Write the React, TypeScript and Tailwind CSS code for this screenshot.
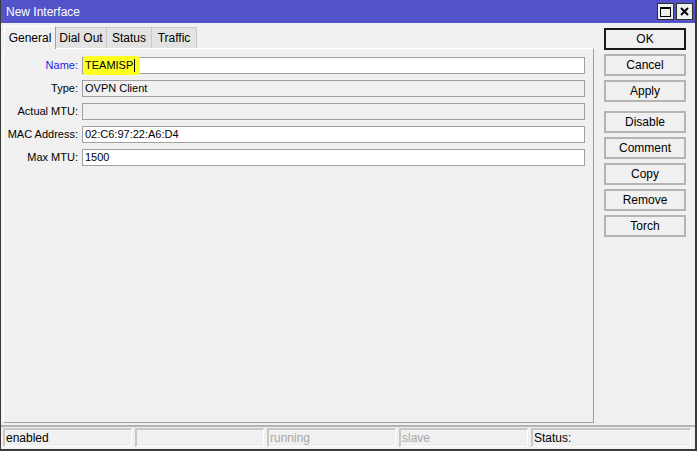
import React from "react";

const fields = [
  { label: "Name:", value: "TEAMISP", blue: true, white: true, hl: true },
  { label: "Type:", value: "OVPN Client", white: false },
  { label: "Actual MTU:", value: "", white: false },
  { label: "MAC Address:", value: "02:C6:97:22:A6:D4", white: true },
  { label: "Max MTU:", value: "1500", white: true },
];

const tabs = [
  { name: "General", w: "w-[52px]" },
  { name: "Dial Out", w: "w-[51px]" },
  { name: "Status", w: "w-[45px]" },
  { name: "Traffic", w: "w-[45px]" },
];

const buttons = [
  { name: "OK", top: 0, primary: true },
  { name: "Cancel", top: 4 },
  { name: "Apply", top: 4 },
  { name: "Disable", top: 9 },
  { name: "Comment", top: 4 },
  { name: "Copy", top: 4 },
  { name: "Remove", top: 4 },
  { name: "Torch", top: 4 },
];

const status = [
  { text: "enabled", dim: false, w: "w-[129px]" },
  { text: "", dim: false, w: "w-[129px]" },
  { text: "running", dim: true, w: "w-[129px]" },
  { text: "slave", dim: true, w: "w-[129px]" },
  { text: "Status:", dim: false, w: "flex-1" },
];

export default function App() {
  return (
    <div
      className="w-[697px] h-[451px] bg-[#f0f0f0] flex flex-col border-l border-r-2 border-b-2 border-[#3a3a3a] overflow-hidden text-[11px] text-black"
      style={{ fontFamily: '"Liberation Sans", Arial, sans-serif' }}
    >
      {/* Title bar */}
      <div className="h-[23px] bg-[#5353c9] flex items-center justify-between pl-[5px] pr-[2px] shrink-0">
        <span className="text-white text-[12px]">New Interface</span>
        <div className="flex gap-[2px]">
          <div className="w-[17px] h-[17px] bg-[#f0f0f0] border border-[#303030] flex items-center justify-center">
            <div className="w-[11px] h-[10px] border border-black border-t-2" />
          </div>
          <div className="w-[17px] h-[17px] bg-[#f0f0f0] border border-[#303030] flex items-center justify-center">
            <svg width="9" height="9" viewBox="0 0 9 9">
              <path d="M1 1L8 8M8 1L1 8" stroke="black" strokeWidth="2" />
            </svg>
          </div>
        </div>
      </div>

      <div className="flex flex-1 min-h-0">
        {/* Left: tabs + panel */}
        <div className="w-[593px] flex flex-col pl-[2px] pt-[2px]">
          <div className="flex h-[23px] items-end pl-[1px]">
            {tabs.map((t, i) =>
              i === 0 ? (
                <div
                  key={t.name}
                  className={`${t.w} h-[23px] flex items-center justify-center bg-[#f0f0f0] border-l border-t border-white border-r border-r-[#a0a0a0] relative z-10 -mb-px text-[12px]`}
                >
                  {t.name}
                </div>
              ) : (
                <div
                  key={t.name}
                  className={`${t.w} h-[21px] flex items-center justify-center bg-[#e3e3e3] border-t border-r border-[#c8c8c8] text-[12px]`}
                >
                  {t.name}
                </div>
              )
            )}
          </div>
          <div className="flex-1 border-t border-l border-white border-r border-b border-r-[#a0a0a0] border-b-[#a0a0a0] pt-[8px] pr-[8px] flex flex-col gap-[6px] mb-[2px]">
            {fields.map((f) => (
              <div key={f.label} className="flex items-center h-[17px]">
                <div
                  className={`w-[75px] text-right pr-[1px] ${f.blue ? "text-[#1a1aee]" : "text-black"}`}
                >
                  {f.label}
                </div>
                <div
                  className={`ml-[3px] flex-1 h-[17px] border border-[#a0a0a0] flex items-center px-[2px] relative ${f.white ? "bg-white" : "bg-[#f0f0f0]"}`}
                >
                  {f.hl ? (
                    <span className="bg-[#ffff22] rounded-[4px] px-[2px] -ml-[2px] h-[19px] flex items-center">
                      {f.value}
                      <span className="w-px h-[13px] bg-black ml-[1px]" />
                      <span className="w-[3px]" />
                    </span>
                  ) : (
                    f.value
                  )}
                </div>
              </div>
            ))}
          </div>
        </div>

        {/* Right: buttons */}
        <div className="flex-1 pl-[10px] pt-[5px] flex flex-col">
          {buttons.map((b) => (
            <div
              key={b.name}
              style={{ marginTop: b.top }}
              className={`w-[82px] h-[22px] flex items-center justify-center text-[12px] bg-[#f0f0f0] ${b.primary ? "border-2 border-[#1a1a1a]" : "border-2 border-[#b4b4b4]"}`}
            >
              {b.name}
            </div>
          ))}
        </div>
      </div>

      {/* Status bar */}
      <div className="h-[24px] border-t-2 border-[#b4b4b4] flex gap-[3px] pl-[2px] pr-[4px] pt-[1px] pb-[3px] shrink-0">
        {status.map((s, i) => (
          <div
            key={i}
            className={`${s.w} h-[19px] border-t-2 border-l-2 border-[#c8c8c8] border-r border-b border-r-white border-b-white flex items-center pl-[1px] ${s.dim ? "text-[#a8a8a8]" : "text-black"} text-[12px]`}
          >
            {s.text}
          </div>
        ))}
      </div>
    </div>
  );
}
